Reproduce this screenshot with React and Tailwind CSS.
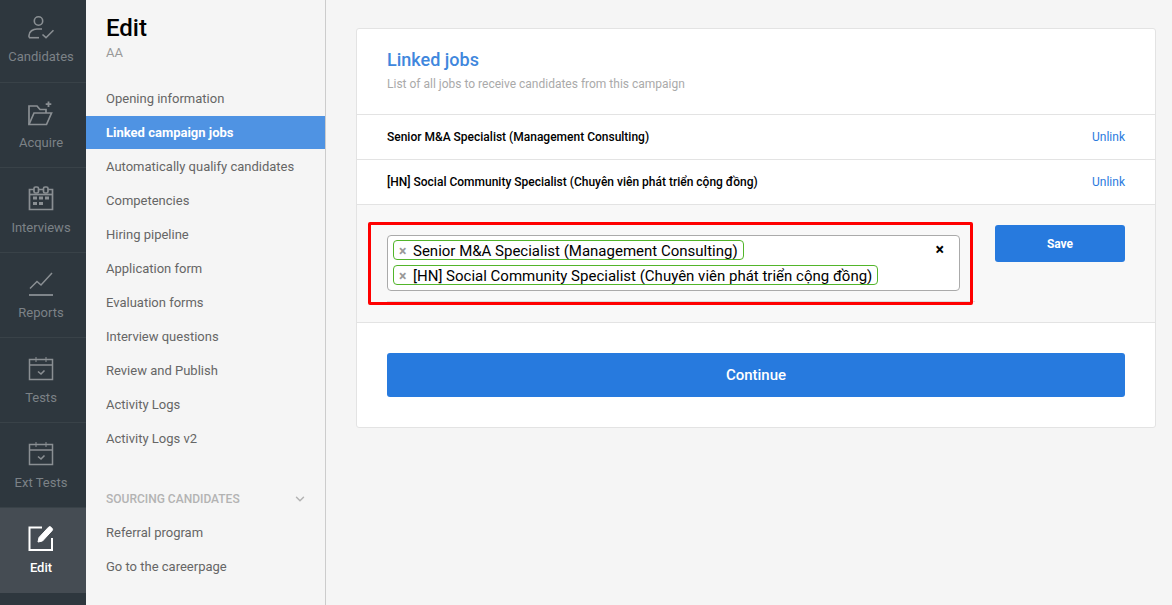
import { ChevronDown } from 'lucide-react';

const Icon = ({ children }) => (
    <svg width="26" height="26" viewBox="0 0 26 26" fill="none" stroke="currentColor" strokeWidth="1.5">
        {children}
    </svg>
);

const CandidatesIcon = () => (
    <svg width="26" height="26" viewBox="0 0 26 26" fill="none" stroke="currentColor" strokeWidth="1.6">
        <circle cx="10.5" cy="6" r="4.2" />
        <path d="M1 22.5v-2c0-4 4-6.5 8-6.5h5" />
        <path d="M1 22.7h10" />
        <path d="M14.5 19.5l3.5 3.2 7.5-7.5" />
    </svg>
);

const AcquireIcon = () => (
    <svg width="26" height="26" viewBox="0 0 26 26" fill="none" stroke="currentColor" strokeWidth="1.7">
        <path d="M1 23.5V5h8l3 3.5h6V12" />
        <path d="M1 23.5h17.5l5-11.5H6L1 23.5z" />
        <path d="M20.5 0.5v5.5M17.7 3.2h5.6" strokeWidth="1.8" />
    </svg>
);

const InterviewsIcon = () => (
    <Icon>
        <path d="M6 3.5H1.5v20h23v-20H20M11 3.5h4" strokeWidth="1.7" />
        <rect x="6" y="1" width="4.5" height="6" rx="1.5" strokeWidth="1.7" />
        <rect x="15.5" y="1" width="4.5" height="6" rx="1.5" strokeWidth="1.7" />
        <path d="M1.5 8.5h23" strokeWidth="1.7" />
        <path d="M5 10.5h4v3H5zM11 10.5h4v3h-4zM17 10.5h4v3h-4zM5 16h4v3H5zM11 16h4v3h-4z" fill="currentColor" stroke="none" />
    </Icon>
);

const ReportsIcon = () => (
    <Icon>
        <path d="M2 17.5l7-7 4 3.5L24 2" />
        <path d="M1 24h24" strokeWidth="1.8" />
    </Icon>
);

const TestsIcon = () => (
    <Icon>
        <path d="M1.5 3.5h23v20h-23zM1.5 9h23" strokeWidth="1.5" />
        <path d="M8 1v5M18 1v5" strokeWidth="1" />
        <path d="M10 15.5l3 2.5 3.5-3.5" strokeWidth="1.6" />
    </Icon>
);

const EditIcon = () => (
    <svg width="26" height="26" viewBox="0 0 26 26" fill="none" stroke="currentColor" strokeWidth="2">
        <path d="M14 1.5H1.5v22.5h22.5V12" />
        <path d="M10 16l1-4.5L20.5 1.2a1.8 1.8 0 0 1 2.5 0l1 1a1.8 1.8 0 0 1 0 2.5L14.5 15z" fill="currentColor" stroke="currentColor" strokeWidth="1" />
    </svg>
);

const railItems = [
    { label: 'Candidates', icon: <CandidatesIcon /> },
    { label: 'Acquire', icon: <AcquireIcon /> },
    { label: 'Interviews', icon: <InterviewsIcon /> },
    { label: 'Reports', icon: <ReportsIcon /> },
    { label: 'Tests', icon: <TestsIcon /> },
    { label: 'Ext Tests', icon: <TestsIcon /> },
];

const menuItems = [
    'Opening information',
    'Linked campaign jobs',
    'Automatically qualify candidates',
    'Competencies',
    'Hiring pipeline',
    'Application form',
    'Evaluation forms',
    'Interview questions',
    'Review and Publish',
    'Activity Logs',
    'Activity Logs v2',
];

const linkedJobs = [
    'Senior M&A Specialist (Management Consulting)',
    '[HN] Social Community Specialist (Chuyên viên phát triển cộng đồng)',
];

const Tag = ({ label }) => (
    <span className="flex items-center h-[20px] w-fit border border-[#52b52a] rounded-[4px] pl-[5px] pr-[5px] pt-[1px] text-[15px] leading-[18px] text-black">
        <span className="w-[9px] mr-[5px] text-[14px] font-bold text-[#999999]">×</span>
        {label}
    </span>
);

const App = () => {
    return (
        <div className="relative flex h-[605px] w-[1172px] overflow-hidden bg-[#f5f5f5] font-['Roboto',sans-serif]">
            <nav className="flex flex-col w-[86px] shrink-0 bg-[#2e373e]">
                {railItems.map((item, i) => (
                    <div
                        key={item.label}
                        className={
                            i === 0
                                ? 'flex flex-col items-center h-[83px] pt-[15px] pr-[4px] border-b border-[#394248] text-[#8a8f93]'
                                : 'flex flex-col items-center h-[85px] pt-[18px] pr-[4px] border-b border-[#394248] text-[#8a8f93]'
                        }
                    >
                        <div className="h-[26px]">{item.icon}</div>
                        <span className="mt-[8px] text-[13px] leading-[16px] text-[#7c8287]">{item.label}</span>
                    </div>
                ))}
                <div className="flex flex-col items-center h-[85px] pt-[18px] pr-[4px] bg-[#454c53] text-white">
                    <div className="h-[26px]"><EditIcon /></div>
                    <span className="mt-[8px] text-[13px] leading-[16px] font-medium">Edit</span>
                </div>
            </nav>

            <aside className="w-[240px] shrink-0 border-r border-[#cccccc] bg-[#f5f5f5]">
                <div className="pl-[20px] pt-[14px]">
                    <h1 className="text-[24px] leading-[28px] font-medium text-black">Edit</h1>
                    <p className="mt-[3px] text-[13px] leading-[16px] text-[#999999]">AA</p>
                </div>
                <ul className="mt-[21px]">
                    {menuItems.map((item) => (
                        <li
                            key={item}
                            className={
                                item === 'Linked campaign jobs'
                                    ? 'h-[33px] mb-[1px] pl-[20px] bg-[#4f93e3] text-[13px] leading-[33px] font-bold text-white'
                                    : 'h-[34px] pl-[20px] text-[13px] leading-[34px] text-[#666666]'
                            }
                        >
                            {item}
                        </li>
                    ))}
                </ul>
                <div className="flex items-center justify-between mt-[34px] h-[17px] pl-[20px] pr-[18px] text-[12px] font-medium text-[#b3b3b3]">
                    <span>SOURCING CANDIDATES</span>
                    <ChevronDown size={14} strokeWidth={2.5} />
                </div>
                <ul className="mt-[9px]">
                    <li className="h-[34px] pl-[20px] text-[13px] leading-[34px] text-[#666666]">Referral program</li>
                    <li className="h-[34px] pl-[20px] text-[13px] leading-[34px] text-[#666666]">Go to the careerpage</li>
                </ul>
            </aside>

            <main className="flex-1 pl-[30px] pr-[16px] pt-[28px]">
                <section className="h-[400px] border border-[#e3e3e3] rounded-[3px] bg-white">
                    <header className="h-[86px] px-[30px] pt-[19px] border-b border-[#e3e3e3]">
                        <h2 className="text-[18px] leading-[24px] font-medium text-[#3f87dd]">Linked jobs</h2>
                        <p className="mt-[4px] text-[12px] leading-[16px] text-[#aaaaaa]">List of all jobs to receive candidates from this campaign</p>
                    </header>
                    {linkedJobs.map((job) => (
                        <div key={job} className="flex items-center justify-between h-[45px] px-[30px] border-b border-[#e3e3e3] text-[12px]">
                            <span className="font-medium text-black">{job}</span>
                            <a className="text-[#2a7ade]">Unlink</a>
                        </div>
                    ))}
                    <div className="flex justify-between h-[118px] pl-[30px] pr-[30px] pt-[20px] border-b border-[#e3e3e3] bg-[#f8f8f8]">
                        <div className="w-[588px] h-[77px] pt-[10px] border-b border-[#dddddd]">
                            <div className="relative flex flex-col gap-[5px] h-[56px] w-[573px] pl-[5px] pt-[4px] border border-[#aaaaaa] rounded-[4px] bg-white">
                                {linkedJobs.map((job) => (
                                    <Tag key={job} label={job} />
                                ))}
                                <span className="absolute right-[15px] top-[5px] text-[16px] leading-[18px] font-bold text-black">×</span>
                            </div>
                        </div>
                        <button className="h-[37px] w-[130px] rounded-[3px] bg-[#277ade] text-[12px] font-bold text-white">Save</button>
                    </div>
                    <div className="px-[30px] pt-[30px]">
                        <button className="h-[44px] w-full rounded-[3px] bg-[#277ade] text-[15px] font-medium text-white">Continue</button>
                    </div>
                </section>
            </main>

            {/* red annotation drawn over the screenshot */}
            <div className="absolute left-[368px] top-[222px] h-[83px] w-[605px] border-[3px] border-[#ff0000] rounded-[2px]" />
        </div>
    );
};

export default App;
